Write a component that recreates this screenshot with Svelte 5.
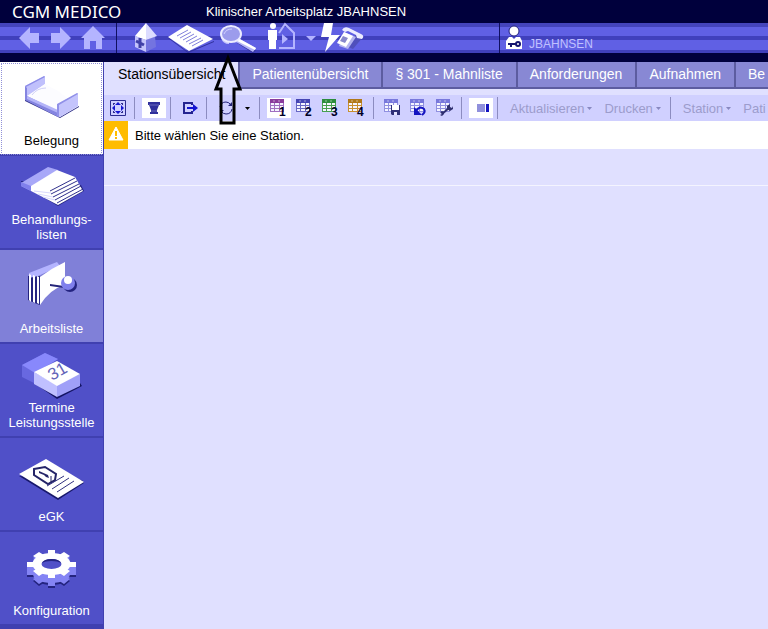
<script lang="ts">
  const modules = [
    { id: "bed", lines: ["Belegung"] },
    { id: "lists", lines: ["Behandlungs-", "listen"] },
    { id: "worklist", lines: ["Arbeitsliste"] },
    { id: "dates", lines: ["Termine", "Leistungsstelle"] },
    { id: "card", lines: ["eGK"] },
    { id: "config", lines: ["Konfiguration"] },
  ];

  const tabs = [
    "Stationsübersicht",
    "Patientenübersicht",
    "§ 301 - Mahnliste",
    "Anforderungen",
    "Aufnahmen",
    "Be",
  ];

  const layouts = [
    { nr: 1, head: "#8a3c9c", line: "#a070c0" },
    { nr: 2, head: "#4646b4", line: "#6868c4" },
    { nr: 3, head: "#2c8c3c", line: "#48a050" },
    { nr: 4, head: "#b07818", line: "#c89030" },
  ];

  const tools = ["save", "reset", "settings"];

  let activeModule = $state("bed");
  let activeTab = $state("Stationsübersicht");
  let activeLayout = $state(1);
</script>

{#snippet grid(head: string, line: string)}
  <path d="M0 0h14v4H0z" fill={head} />
  <path d="M0 4h14v9H0z" fill={line} />
  <path
    d="M1 4h3v2H1zM5 4h4v2H5zM10 4h3v2h-3zM1 7h3v2H1zM5 7h4v2H5zM10 7h3v2h-3zM1 10h3v2H1zM5 10h4v2H5zM10 10h3v2h-3z"
    fill="#f4f4ff"
  />
  <path d="M4 1v2M9 1v2" stroke="#fff" opacity=".5" />
{/snippet}

{#snippet gear(y: number, color: string)}
  <g transform={`translate(0 ${y})`} fill={color}>
    <ellipse cx="51.5" cy="32" rx="19" ry="11" />
    <path d="M48 18h7v28h-7zM27 30h49v5H27zM33 24l6-4 31 19-6 5zM70 24l-6-4-31 19 6 5z" />
  </g>
{/snippet}

{#snippet separator()}
  <span class="separator" aria-hidden="true"></span>
{/snippet}

{#snippet menu(label: string)}
  <button class="menu" type="button">
    {label}
    <svg width="5" height="3" viewBox="0 0 5 3" aria-hidden="true">
      <path d="M0 0h5L2.5 3z" />
    </svg>
  </button>
{/snippet}

<div class="app">
  <header>
    <div class="title">
      <strong>CGM MEDICO</strong>
      <h1>Klinischer Arbeitsplatz JBAHNSEN</h1>
    </div>

    <div class="band">
      <nav aria-label="Hauptnavigation">
        <button type="button" aria-label="Zurück">
          <svg width="32" height="30" viewBox="0 0 32 30">
            <path d="M6 15 17 4v6h9v10h-9v6z" fill="#b4b4ff" />
          </svg>
        </button>
        <button type="button" aria-label="Vorwärts">
          <svg width="32" height="30" viewBox="0 0 32 30">
            <path d="M26 15 15 4v6H6v10h9v6z" fill="#b4b4ff" />
          </svg>
        </button>
        <button type="button" aria-label="Startseite">
          <svg width="32" height="30" viewBox="0 0 32 30">
            <path d="m16 3 12 12h-3v11h-6v-8h-6v8H7V15H4z" fill="#b4b4ff" />
          </svg>
        </button>
        <span class="divider" aria-hidden="true"></span>
        <button type="button" aria-label="Klinik">
          <svg width="36" height="30" viewBox="0 0 36 30">
            <path d="m26 13 1 11-10 5V17z" fill="#7474e0" />
            <path d="m6 13 11 4v12L6 24z" fill="#c4c4fc" />
            <path d="M17 0 6 13l11 4z" fill="#fff" />
            <path d="m17 0 11 13-11 4z" fill="#dcdcff" />
            <path d="m7 18 8 4M11 15v10" stroke="#4040a8" stroke-width="3" />
          </svg>
        </button>
        <button type="button" aria-label="Dokumente">
          <svg width="52" height="30" viewBox="0 0 52 30">
            <path d="m3 14 20 15 26-11v1L23 30 3 15z" fill="#30309c" />
            <path d="M22 2 3 14l21 14 24-12z" fill="#fff" />
            <path
              d="m12 13 11-6M15 15l11-6M18 17l11-6M21 19l11-6M24 21l12-6M27 23l11-6"
              stroke="#8080dc"
            />
          </svg>
        </button>
        <button type="button" aria-label="Suche">
          <svg width="44" height="30" viewBox="0 0 44 30">
            <path d="m22 17 17 10-3 3-16-10z" fill="#30309c" />
            <path d="m21 15 18 10-3 4-17-10z" fill="#b4b4f8" />
            <path d="m21 15 18 10-1 2-18-9z" fill="#fff" />
            <path d="M4 10v5q2 6 8 6v-5z" fill="#c4c4fc" />
            <ellipse cx="14" cy="11" rx="10" ry="8" fill="#9c9cec" stroke="#ececff" stroke-width="2" />
            <path d="M7 11q2-5 8-5" fill="none" stroke="#d0d0ff" />
          </svg>
        </button>
        <button type="button" aria-label="Patient aufnehmen">
          <svg width="40" height="30" viewBox="0 0 40 30">
            <path d="m18 10 6-9 9 9v15H18" fill="none" stroke="#b4b4ff" stroke-width="2" />
            <path d="m21 11 6 5-6 5z" fill="#b4b4ff" />
            <circle cx="12" cy="3" r="3" fill="#fff" />
            <path d="M7 7h9v10h-1v9H8v-9H7z" fill="#fff" />
          </svg>
        </button>
        <button type="button" aria-label="Weitere Aktionen">
          <svg width="18" height="30" viewBox="0 0 18 30">
            <path d="M5 13h10l-5 5z" fill="#b4b4ff" />
          </svg>
        </button>
        <button type="button" aria-label="Notfall und Telefon">
          <svg width="46" height="30" viewBox="0 0 46 30">
            <path d="m20 20 14 6 10-12-7-2z" fill="#5050bc" />
            <path d="M5 0h9l-2 12h9L6 29l4-15H2z" fill="#fff" />
            <path d="m25 9 12 5-8 12-9-3z" fill="#b4b4f0" />
            <path d="m25 9 9 4-7 11-9-4z" fill="#fff" />
            <path d="m24 13 5 2-3 5-5-2z" fill="#8888cc" />
            <path d="M23 7q2-4 7-2l12 6q4 2 1 5l-5-1-1-3-8-4-3 1z" fill="#ececff" />
          </svg>
        </button>
      </nav>

      <div class="user">
        <svg width="20" height="30" viewBox="0 0 20 30" aria-hidden="true">
          <circle cx="9" cy="8" r="5" fill="#fff" stroke="#202080" />
          <path d="M1 26v-8l3-4h3l2 2 2-2h4l2 4v8z" fill="#fff" />
          <path d="M3 20h8v2H7v2H5v-2H3z" fill="#141470" />
          <circle cx="13" cy="21" r="2" fill="none" stroke="#141470" stroke-width="2" />
        </svg>
        <span>JBAHNSEN</span>
      </div>
    </div>
  </header>

  <div class="body">
    <nav class="sidebar" aria-label="Module">
      {#each modules as item (item.id)}
        <button
          class="module"
          class:active={activeModule === item.id}
          class:marked={item.id === "worklist"}
          type="button"
          onclick={() => (activeModule = item.id)}
        >
          <svg width="103" height="56" viewBox="0 0 103 56" aria-hidden="true">
            {#if item.id === "bed"}
              <path d="m25 37 35 18 19-11v1L60 56 25 39z" fill="#303088" />
              <path d="m25 24 20-10v8L27 34z" fill="#c0c0fc" />
              <path d="m25 24 19-10 1 1-19 10z" fill="#8c8ce8" />
              <path d="M28 34 45 22l13 7 9 7-9 6v8z" fill="#fcfcff" />
              <path d="M32 33q5-7 14-7" fill="none" stroke="#d0d0f8" />
              <path d="m25 24 2 2v8l31 15v6L25 38z" fill="#8484e0" />
              <path d="m27 34 31 14v3L27 37z" fill="#b4b4f8" />
              <path d="m58 42 20-11v13L60 55l-2-1z" fill="#c4c4fc" />
              <path d="m57 42 20-11 1 1-19 11v12l-2-1z" fill="#9090e8" />
            {:else if item.id === "lists"}
              <path d="m21 28 37 22 26-15-3-6-60-4z" fill="#242480" />
              <path d="m21 27 27-16 10 3-27 17v4l-10-5z" fill="#a8a8f8" />
              <path d="m21 26 10 4v5l-10-5z" fill="#8080ec" />
              <path d="m31 30 26-16 18 7 8 14-25 14-27-14z" fill="#fff" />
              <path
                d="m50 35 25-13M51 38l26-13M53 41l26-13M55 44l26-14M57 47l26-14"
                stroke="#30308c"
              />
              <path d="m34 35 17 2M38 38l15 3M43 41l12 3" stroke="#d8d8fc" />
            {:else if item.id === "worklist"}
              <path d="M28 26h12v29l-3-1-9-4z" fill="#242480" />
              <path d="m29 23 28-11 3 4-22 10-9 2z" fill="#b4b4ff" />
              <path d="m29 24 2 1v27l-2-2zM33 25l2 1v27l-2-1zM37 26l2 1v27l-2-1z" fill="#fff" />
              <path d="M40 27q12-9 25-15v23q-15 4-25 20z" fill="#fff" />
              <path d="m50 34 14 2v2l-14-2z" fill="#242478" />
              <circle cx="70" cy="35" r="7" fill="#242480" />
              <circle cx="68" cy="33" r="7" fill="#8080ec" />
              <circle cx="68" cy="30" r="4" fill="#fff" />
            {:else if item.id === "dates"}
              <path d="m22 21 23-12 13 6-22 16v9l-14-7z" fill="#6868e0" />
              <path d="m22 21 23-12 13 6-23 14z" fill="#8888fc" />
              <path d="m34 39 23 16 25-13-2-3z" fill="#141464" />
              <path d="m34 28 23 13v12L34 40z" fill="#c0c0ff" />
              <path d="m57 41 23-11v12L57 53z" fill="#a0a0f8" />
              <path d="m34 28 23-11 23 13-23 12z" fill="#fff" />
              <text x="52" y="37" transform="rotate(-30 52 37)">31</text>
            {:else if item.id === "card"}
              <path d="m19 38 39 24 26-17-2-3z" fill="#18186c" />
              <path d="m46 21 38 23-26 16-39-24z" fill="#fff" />
              <path d="m34 31 11-2 11 7-1 6-7 4-14-9z" fill="none" stroke="#242468" stroke-width="2" />
              <path d="m39 33 9 4 1 3-3-1-2-2-5-2z" fill="#242468" />
              <path d="M51 38v6" stroke="#242468" />
              <path d="m47 48 17-10M52 51l17-11M57 54l17-11" stroke="#303080" />
            {:else}
              {@render gear(10, "#242480")}
              {#each [8, 6, 4, 2] as depth}
                {@render gear(depth, "#8484f4")}
              {/each}
              {@render gear(0, "#fff")}
              <ellipse cx="51.5" cy="32" rx="10" ry="5" fill="#5050c8" />
              <path d="M42 31q2-4 9.500-4t9.500 4q-3-2-9.500-2T42 31" fill="#242480" />
            {/if}
          </svg>
          <span class="label">
            {#each item.lines as line}
              <span>{line}</span>
            {/each}
          </span>
        </button>
      {/each}
    </nav>

    <main>
      <div class="tabs" role="tablist">
        {#each tabs as tab (tab)}
          <button
            class="tab"
            class:active={activeTab === tab}
            type="button"
            role="tab"
            aria-selected={activeTab === tab}
            onclick={() => (activeTab = tab)}
          >
            {tab}
          </button>
        {/each}
      </div>

      <div class="toolbar" role="toolbar" aria-label="Werkzeuge">
        <button class="tool" type="button" aria-label="Vollbild">
          <svg width="16" height="16" viewBox="0 0 16 16">
            <path d="M.5.5h15v15H.5z" fill="none" stroke="#2c2c90" />
            <path d="m8 2 3 3H5zM8 14l3-3H5zM2 8l3-3v6zM14 8l-3-3v6z" fill="#1414d0" />
            <path d="M6 5h4l1 1v4l-1 1H6l-1-1V6z" fill="#d0d0ff" />
            <path d="M3 3h2v1H4v1H3zM11 3h2v2h-1V4h-1zM3 11h1v1h1v1H3zM12 11h1v2h-2v-1h1z" fill="#2c2c90" />
          </svg>
        </button>
        {@render separator()}
        <button class="tool pressed" type="button" aria-label="Filter">
          <svg width="16" height="16" viewBox="0 0 16 16">
            <path d="M2 2h12v3h-1l-2 5v2h1v2H4v-2h1v-2L3 5H2z" fill="#30309c" />
            <path d="M3 5h10M5 11h6" stroke="#6868bc" />
          </svg>
        </button>
        {@render separator()}
        <button class="tool" type="button" aria-label="Exportieren">
          <svg width="16" height="16" viewBox="0 0 16 16">
            <path d="M10 5V3H2v10h8v-2" fill="none" stroke="#242490" stroke-width="2" />
            <path d="M5 7h6V4l5 4-5 4V9H5z" fill="#1414d0" />
          </svg>
        </button>
        {@render separator()}
        <button class="tool" type="button" aria-label="Neu laden">
          <svg width="16" height="16" viewBox="0 0 16 16">
            <path d="M2 7q1-5 6-5 3 0 5 3M14 9q-1 5-6 5-3 0-5-3" fill="none" stroke="#242478" />
            <path d="M14 2v4h-4zM2 14v-4h4z" fill="#242478" />
          </svg>
        </button>
        <button class="caret" type="button" aria-label="Intervall wählen">
          <svg width="5" height="3" viewBox="0 0 5 3"><path d="M0 0h5L2.5 3z" /></svg>
        </button>
        {@render separator()}
        {#each layouts as layout (layout.nr)}
          <button
            class="tool"
            class:pressed={activeLayout === layout.nr}
            type="button"
            aria-label={`Ansicht ${layout.nr}`}
            onclick={() => (activeLayout = layout.nr)}
          >
            <svg width="18" height="18" viewBox="0 0 18 18">
              {@render grid(layout.head, layout.line)}
              <text x="9" y="17">{layout.nr}</text>
            </svg>
          </button>
        {/each}
        {@render separator()}
        {#each tools as tool (tool)}
          <button class="tool" type="button" aria-label={`Tabelle ${tool}`}>
            <svg width="18" height="18" viewBox="0 0 18 18">
              {@render grid("#7878dc", "#9090e0")}
              {#if tool === "save"}
                <path d="M7 6h9v10H8l-1-1z" fill="#303078" />
                <path d="M8 6h7v5H8z" fill="#fff" />
                <path d="M10 13h3v3h-3z" fill="#e4e4ff" />
              {:else if tool === "reset"}
                <path d="M6 12q4-6 8-2 2 3-2 6" fill="none" stroke="#1414c0" stroke-width="2" />
                <path d="M4 8v8h8z" fill="#1414c0" />
              {:else}
                <path d="m6 15 7-6" stroke="#303070" stroke-width="2" />
                <path d="m11 7 3-2v3l2 1 1-2v3l-3 2-3-2zM4 13l2-1 2 1v2l-2 2-2-1 2-1z" fill="#303070" />
              {/if}
            </svg>
          </button>
        {/each}
        {@render separator()}
        <button class="tool pressed" type="button" aria-label="Seitenleiste">
          <svg width="16" height="16" viewBox="0 0 16 16">
            <path d="M4 4h8v8H4z" fill="#9090dc" />
            <path d="M13 4h3v8h-3z" fill="#1414c0" />
          </svg>
        </button>
        {@render separator()}
        {@render menu("Aktualisieren")}
        {@render menu("Drucken")}
        {@render separator()}
        {@render menu("Station")}
        {@render menu("Pati")}
      </div>

      <div class="message" role="status">
        <svg width="24" height="28" viewBox="0 0 24 28" aria-hidden="true">
          <path d="M0 0h24v28H0z" fill="#ffbc00" />
          <path d="m12 6 7 13H5z" fill="#fff" stroke="#fff" stroke-linejoin="round" />
          <path d="M11 10h2v5h-2zM11 16h2v2h-2z" fill="#ffbc00" />
        </svg>
        <p>Bitte wählen Sie eine Station.</p>
      </div>

      <div class="content-head"></div>
    </main>
  </div>

  <svg class="pointer" width="32" height="72" viewBox="0 0 32 72" aria-hidden="true">
    <path d="M16 4 28 35h-6v34H9V35H4z" />
  </svg>
</div>

<style>
  :global(body) {
    margin: 0;
    background: #e0e0ff;
  }

  .app {
    position: relative;
    display: flex;
    flex-direction: column;
    min-height: 100vh;
    overflow: hidden;
    font-family: "Liberation Sans", Arial, sans-serif;
    font-size: 13px;
    line-height: 15px;
  }

  button {
    padding: 0;
    border: 0;
    color: inherit;
    background: none;
    font: inherit;
    cursor: pointer;
  }

  svg {
    display: block;
    flex: none;
    overflow: visible;
  }

  header {
    padding-bottom: 9px;
    background: #00003c;
  }

  .title {
    display: flex;
    align-items: center;
    height: 23px;
    padding-left: 12px;
    color: #fff;
  }

  .title strong {
    width: 194px;
    font-family: "Noto Sans", sans-serif;
    font-size: 17px;
    font-weight: 400;
    line-height: 22px;
  }

  .title h1 {
    margin: 0;
    font-size: 13px;
    font-weight: 400;
    white-space: nowrap;
  }

  .band {
    display: flex;
    height: 30px;
    background: linear-gradient(
      #4444bc 4px,
      #6060e4 4px 13px,
      #4040bc 13px 17px,
      #6060e4 17px 27px,
      #4040bc 27px
    );
  }

  .band nav {
    display: flex;
    padding-left: 13px;
  }

  .divider {
    width: 1px;
    margin: 0 12px 0 7px;
    background: #101060;
  }

  .user {
    display: flex;
    flex: 0 0 263px;
    margin-left: auto;
    padding-left: 5px;
    border-left: 1px solid #101060;
    color: #c0c0ff;
    font-size: 12px;
  }

  .user span {
    padding: 14px 0 0 4px;
  }

  .body {
    display: flex;
    flex: 1;
  }

  .sidebar {
    flex: 0 0 103px;
    border-right: 1px solid #4040b0;
    background: #4040b0;
  }

  .module {
    display: flex;
    flex-direction: column;
    width: 100%;
    height: 94px;
    padding-bottom: 6px;
    border-bottom: 2px solid #4040b0;
    color: #fff;
    background: #5050c8;
  }

  .module.marked {
    background: #8080d8;
  }

  .module.active {
    color: #000;
    background: #fff;
    outline: 1px dotted #9090d8;
    outline-offset: -2px;
  }

  .module text {
    fill: #6464b8;
    font-size: 17px;
  }

  .label {
    width: 100%;
    margin-top: auto;
  }

  .label span {
    display: block;
  }

  main {
    flex: 1;
    min-width: 0;
    overflow: hidden;
    background: #e0e0ff;
  }

  .tabs {
    display: flex;
    height: 27px;
    margin-bottom: 6px;
  }

  .tab {
    flex: none;
    padding: 0 13px 0 12px;
    border-right: 2px solid #5c5ca0;
    border-bottom: 2px solid #5c5ca0;
    color: #fff;
    background: #8888d4;
    font-size: 14px;
    white-space: nowrap;
  }

  .tab.active {
    padding-left: 14px;
    border-bottom-color: #e0e0ff;
    color: #000;
    background: #e0e0ff;
  }

  .toolbar {
    display: flex;
    gap: 2px;
    align-items: center;
    height: 26px;
    padding-left: 2px;
    background: #d0d0ff;
  }

  .tool,
  .caret {
    display: flex;
    flex: none;
    align-items: center;
    justify-content: center;
    width: 24px;
    height: 20px;
  }

  .tool.pressed {
    background: #fff;
  }

  .caret {
    width: 15px;
  }

  .tool text {
    fill: #000028;
    font-size: 12px;
    font-weight: 700;
  }

  .separator {
    flex: none;
    width: 1px;
    height: 22px;
    margin: 0 5px 0 2px;
    background: #8c8cc0;
  }

  .menu {
    display: flex;
    flex: none;
    gap: 3px;
    align-items: center;
    padding: 0 5px;
    color: #9c9ccc;
  }

  .menu path {
    fill: #8888c0;
  }

  .message {
    display: flex;
    align-items: center;
    height: 28px;
    background: #fff;
  }

  .message p {
    margin: 0 7px;
  }

  .content-head {
    height: 36px;
    border-bottom: 1px solid #f4f4ff;
  }

  .pointer {
    position: absolute;
    top: 54px;
    left: 212px;
    pointer-events: none;
  }

  .pointer path {
    fill: none;
    stroke: #000;
    stroke-width: 3;
  }
</style>
